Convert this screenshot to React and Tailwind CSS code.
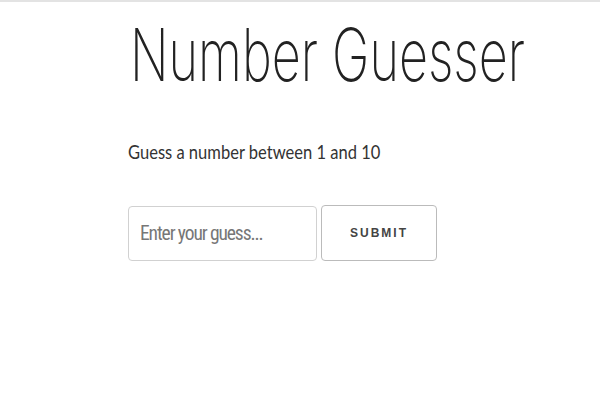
export default function App() {
  return (
    <div className="w-[600px] h-[400px] bg-white border-t-2 border-[#e3e3e3] overflow-hidden">
      <div className="pl-[130px] pt-[13px] flex flex-col items-start">
        <h1 className="whitespace-nowrap origin-left scale-x-[0.69] text-[73px] leading-[80px] font-extralight text-[#222] font-['Inter',sans-serif]">
          Number Guesser
        </h1>
        <p className="mt-[45px] -ml-[2px] whitespace-nowrap origin-left scale-x-[0.87] text-[19px] leading-[24px] text-[#333] font-['Lato',sans-serif]">
          Guess a number between 1 and 10
        </p>
        <div className="mt-[41px] -ml-[2px] flex gap-[4px] items-start">
          <input
            className="w-[189px] h-[55px] mt-[1px] border border-[#d1d1d1] rounded-[4px] px-[11px] text-[19.5px] tracking-[-1.1px] text-[#333] placeholder-[#777] outline-none font-['Liberation_Sans_Narrow','Roboto_Condensed','Liberation_Sans',sans-serif]"
            placeholder="Enter your guess..."
          />
          <button className="w-[116px] h-[56px] border border-[#bbb] rounded-[4px] bg-transparent text-[12px] font-bold tracking-[2px] text-[#444] font-['Liberation_Sans',sans-serif]">
            SUBMIT
          </button>
        </div>
      </div>
    </div>
  );
}
